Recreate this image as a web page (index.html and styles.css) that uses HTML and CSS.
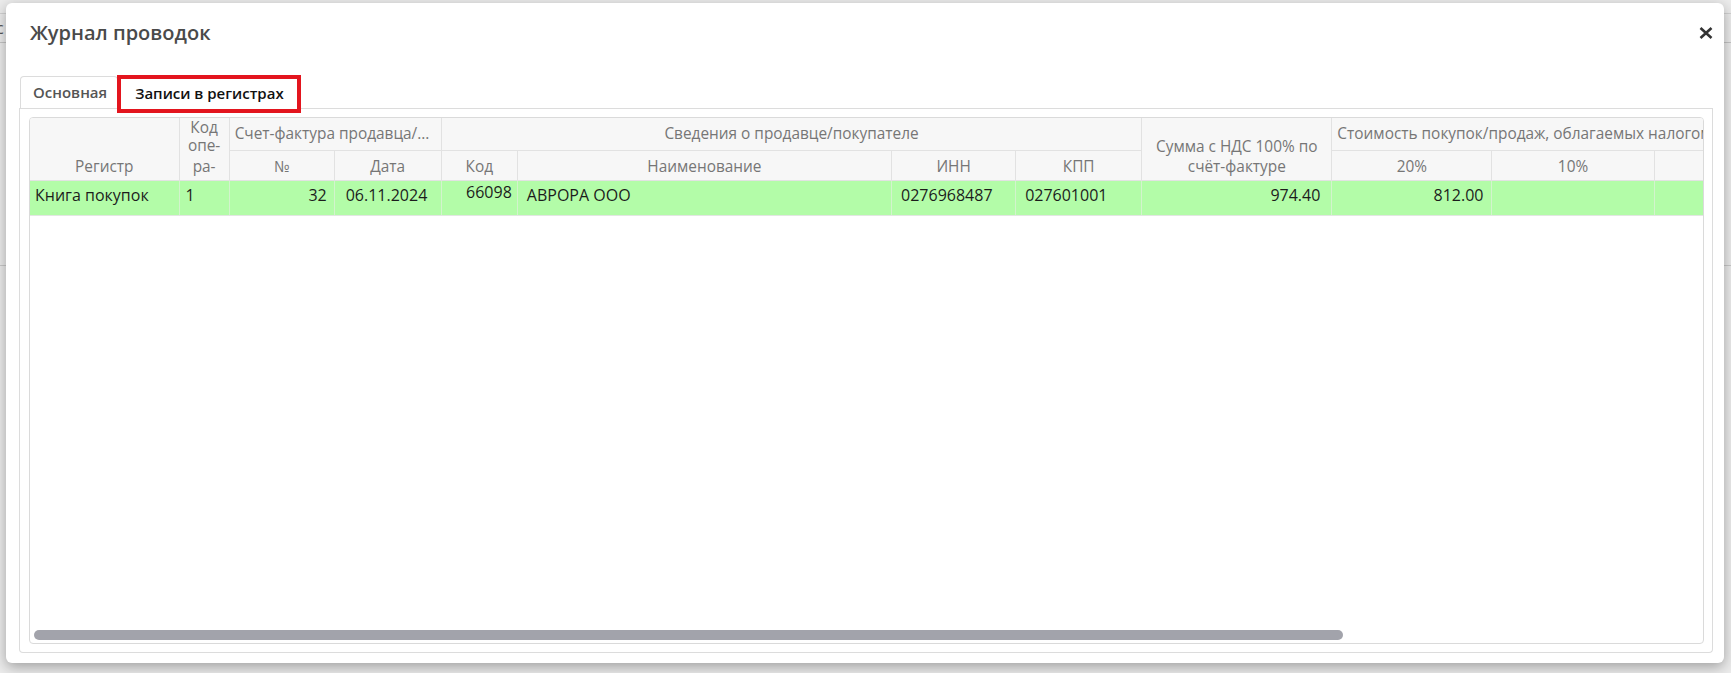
FILE: index.html
```html
<!DOCTYPE html>
<html lang="ru">
<head>
<meta charset="utf-8">
<title>Журнал проводок</title>
<link rel="stylesheet" href="styles.css">
</head>
<body>
<div class="page">
  <div class="page-bar1"></div>
  <div class="page-bar2"><span class="page-letter">с</span></div>
  <div class="page-section"></div>
</div>

<div class="modal">
  <div class="modal-header">
    <h1 class="modal-title">Журнал проводок</h1>
    <button class="close" aria-label="Закрыть">
      <svg width="14" height="12" viewBox="0 0 14 12"><path d="M1.5 1 L12.5 11 M12.5 1 L1.5 11" stroke="#333" stroke-width="2.6" fill="none"/></svg>
    </button>
  </div>
  <div class="modal-body">
    <div class="tabbar">
      <div class="tab">Основная</div>
      <div class="tab active">Записи в регистрах</div>
    </div>
    <div class="tabpanel">
      <div class="grid">
        <div class="grid-view">
          <table class="reg">
            <colgroup>
              <col class="w149"><col class="w50"><col class="w105"><col class="w107"><col class="w76"><col class="w374"><col class="w124"><col class="w126"><col class="w190"><col class="w160"><col class="w162"><col class="w160"><col class="w170"><col class="w171">
            </colgroup>
            <thead>
              <tr class="h1">
                <th rowspan="2" class="bottom reg-col">Регистр</th>
                <th rowspan="2" class="kod-cell"><div class="kod"><span>Код</span><span>опе-</span><span class="kod-last">ра-</span></div></th>
                <th colspan="2" class="left">Счет-фактура продавца/...</th>
                <th colspan="4">Сведения о продавце/покупателе</th>
                <th rowspan="2" class="bottom sum-col">Сумма с НДС 100% по<br>счёт-фактуре</th>
                <th colspan="3" class="left">Стоимость покупок/продаж, облагаемых налогом, по счёт-фактуре (без НДС)</th>
                <th colspan="2">Сумма НДС по счёт-фактуре</th>
              </tr>
              <tr class="h2">
                <th>№</th>
                <th>Дата</th>
                <th>Код</th>
                <th>Наименование</th>
                <th>ИНН</th>
                <th>КПП</th>
                <th>20%</th>
                <th>10%</th>
                <th>0%</th>
                <th>20%</th>
                <th>10%</th>
              </tr>
            </thead>
            <tbody>
              <tr class="data">
                <td class="pl5">Книга покупок</td>
                <td class="pl6">1</td>
                <td class="r pr7">32</td>
                <td class="pl11">06.11.2024</td>
                <td class="r pr5 up">66098</td>
                <td class="pl9">АВРОРА ООО</td>
                <td class="pl9">0276968487</td>
                <td class="pl9">027601001</td>
                <td class="r pr11">974.40</td>
                <td class="r pr8">812.00</td>
                <td></td>
                <td></td>
                <td></td>
                <td></td>
              </tr>
            </tbody>
          </table>
        </div>
        <div class="hscroll"><div class="thumb"></div></div>
      </div>
    </div>
  </div>
</div>
</body>
</html>
```

FILE: styles.css
```css
* { box-sizing: border-box; }
html, body { margin: 0; height: 100%; }
body {
  background: #ececec;
  font-family: "Open Sans", "Noto Sans", "Liberation Sans", sans-serif;
  overflow: hidden;
  position: relative;
}

/* page behind the dialog */
.page-bar1 { height: 14px; border-bottom: 1px solid #d2d2d2; }
.page-bar2 { height: 29px; border-bottom: 1px solid #c6c6c6; font-size: 16px; line-height: 28px; color: #555; }
.page-letter { margin-left: -4px; }
.page-section { height: 223px; border-bottom: 1px solid #cacaca; }

/* dialog */
.modal {
  position: absolute;
  left: 6px;
  top: 3px;
  width: 1718px;
  height: 660px;
  background: #fff;
  border-radius: 6px;
  box-shadow: 0 4px 14px rgba(0, 0, 0, 0.33);
  display: flex;
  flex-direction: column;
}
.modal-header {
  display: flex;
  align-items: center;
  justify-content: space-between;
  height: 44px;
  padding: 16px 11px 0 24px;
}
.modal-title {
  margin: 0;
  font-size: 20px;
  font-weight: 600;
  line-height: 28px;
  color: #4a4a4a;
}
.close {
  border: 0;
  background: none;
  padding: 0;
  width: 14px;
  height: 12px;
  display: block;
  cursor: pointer;
}
.close svg { display: block; }

.modal-body {
  flex: 1;
  min-height: 0;
  display: flex;
  flex-direction: column;
  padding: 28px 11px 10px 13px;
}

/* tabs */
.tabbar {
  display: flex;
  align-items: flex-end;
  border-bottom: 1px solid #dcdcdc;
  padding-left: 1px;
}
.tab {
  height: 32px;
  padding: 0 10px 0 12px;
  border: 1px solid #dcdcdc;
  border-bottom: 0;
  border-radius: 4px 4px 0 0;
  font-size: 15px;
  line-height: 30px;
  color: #555;
  font-weight: 600;
  white-space: nowrap;
}
.tab.active {
  position: relative;
  z-index: 1;
  height: 38px;
  margin-bottom: -5px;
  margin-left: -1px;
  padding: 0 13px 0 14px;
  border: 4px solid #e3151e;
  border-radius: 0;
  background: #fff;
  color: #111;
  line-height: 29px;
}

.tabpanel {
  flex: 1;
  min-height: 0;
  display: flex;
  border: 1px solid #dcdcdc;
  border-top: 0;
  border-radius: 0 0 4px 4px;
  padding: 8px 8px 8px 9px;
}

/* grid */
.grid {
  flex: 1;
  min-width: 0;
  display: flex;
  flex-direction: column;
  border: 1px solid #dadada;
  border-radius: 4px;
  overflow: hidden;
}
.grid-view {
  flex: 1;
  min-height: 0;
  overflow: hidden;
}
.hscroll {
  flex: none;
  height: 14px;
  padding: 1px 4px 3px;
}
.thumb {
  width: 1309px;
  height: 10px;
  border-radius: 5px;
  background: #a2a3ab;
}

.reg {
  width: 2126px;
  table-layout: fixed;
  border-collapse: collapse;
}
.w149 { width: 149px; }
.w50 { width: 50px; }
.w105 { width: 105px; }
.w107 { width: 107px; }
.w76 { width: 76px; }
.w374 { width: 374px; }
.w124 { width: 124px; }
.w126 { width: 126px; }
.w190 { width: 190px; }
.w160 { width: 160px; }
.w162 { width: 162px; }
.w170 { width: 170px; }
.w171 { width: 171px; }

.reg th {
  background: #f7f7f7;
  border-right: 1px solid #e2e2e2;
  border-bottom: 1px solid #e2e2e2;
  font-size: 15.4px;
  font-weight: 400;
  color: #767676;
  line-height: 20px;
  padding: 0 5px;
  text-align: center;
  white-space: nowrap;
  overflow: hidden;
  vertical-align: middle;
}
.reg th.left { text-align: left; }
.reg tr.h1 { height: 32px; }
.reg tr.h2 { height: 30px; }
.reg tr.h2 th { padding-top: 4px; }
.reg th.bottom { vertical-align: bottom; }
.reg th.reg-col { padding-bottom: 3px; }
.reg th.sum-col { line-height: 20px; padding-bottom: 3px; }
.reg th.kod-cell { vertical-align: top; padding: 1px 0 0; }
.kod { display: flex; flex-direction: column; align-items: center; line-height: 18px; }
.kod-last { margin-top: 3px; }

.reg tr.data { height: 35px; }
.reg td {
  background: #b3fca8;
  border-right: 1px solid #d3f3cd;
  border-bottom: 1px solid #e2e7e1;
  font-size: 16px;
  line-height: 20px;
  color: #1c1c1c;
  padding: 0 6px 6px;
  white-space: nowrap;
  overflow: hidden;
  vertical-align: middle;
}
.reg td.r { text-align: right; }
.reg td.pl5 { padding-left: 5px; }
.reg td.pl6 { padding-left: 6px; }
.reg td.pl9 { padding-left: 9px; }
.reg td.pl11 { padding-left: 11px; }
.reg td.pr5 { padding-right: 5px; }
.reg td.pr7 { padding-right: 7px; }
.reg td.pr8 { padding-right: 8px; }
.reg td.pr11 { padding-right: 11px; }
.reg td.up { padding-bottom: 12px; }
```
